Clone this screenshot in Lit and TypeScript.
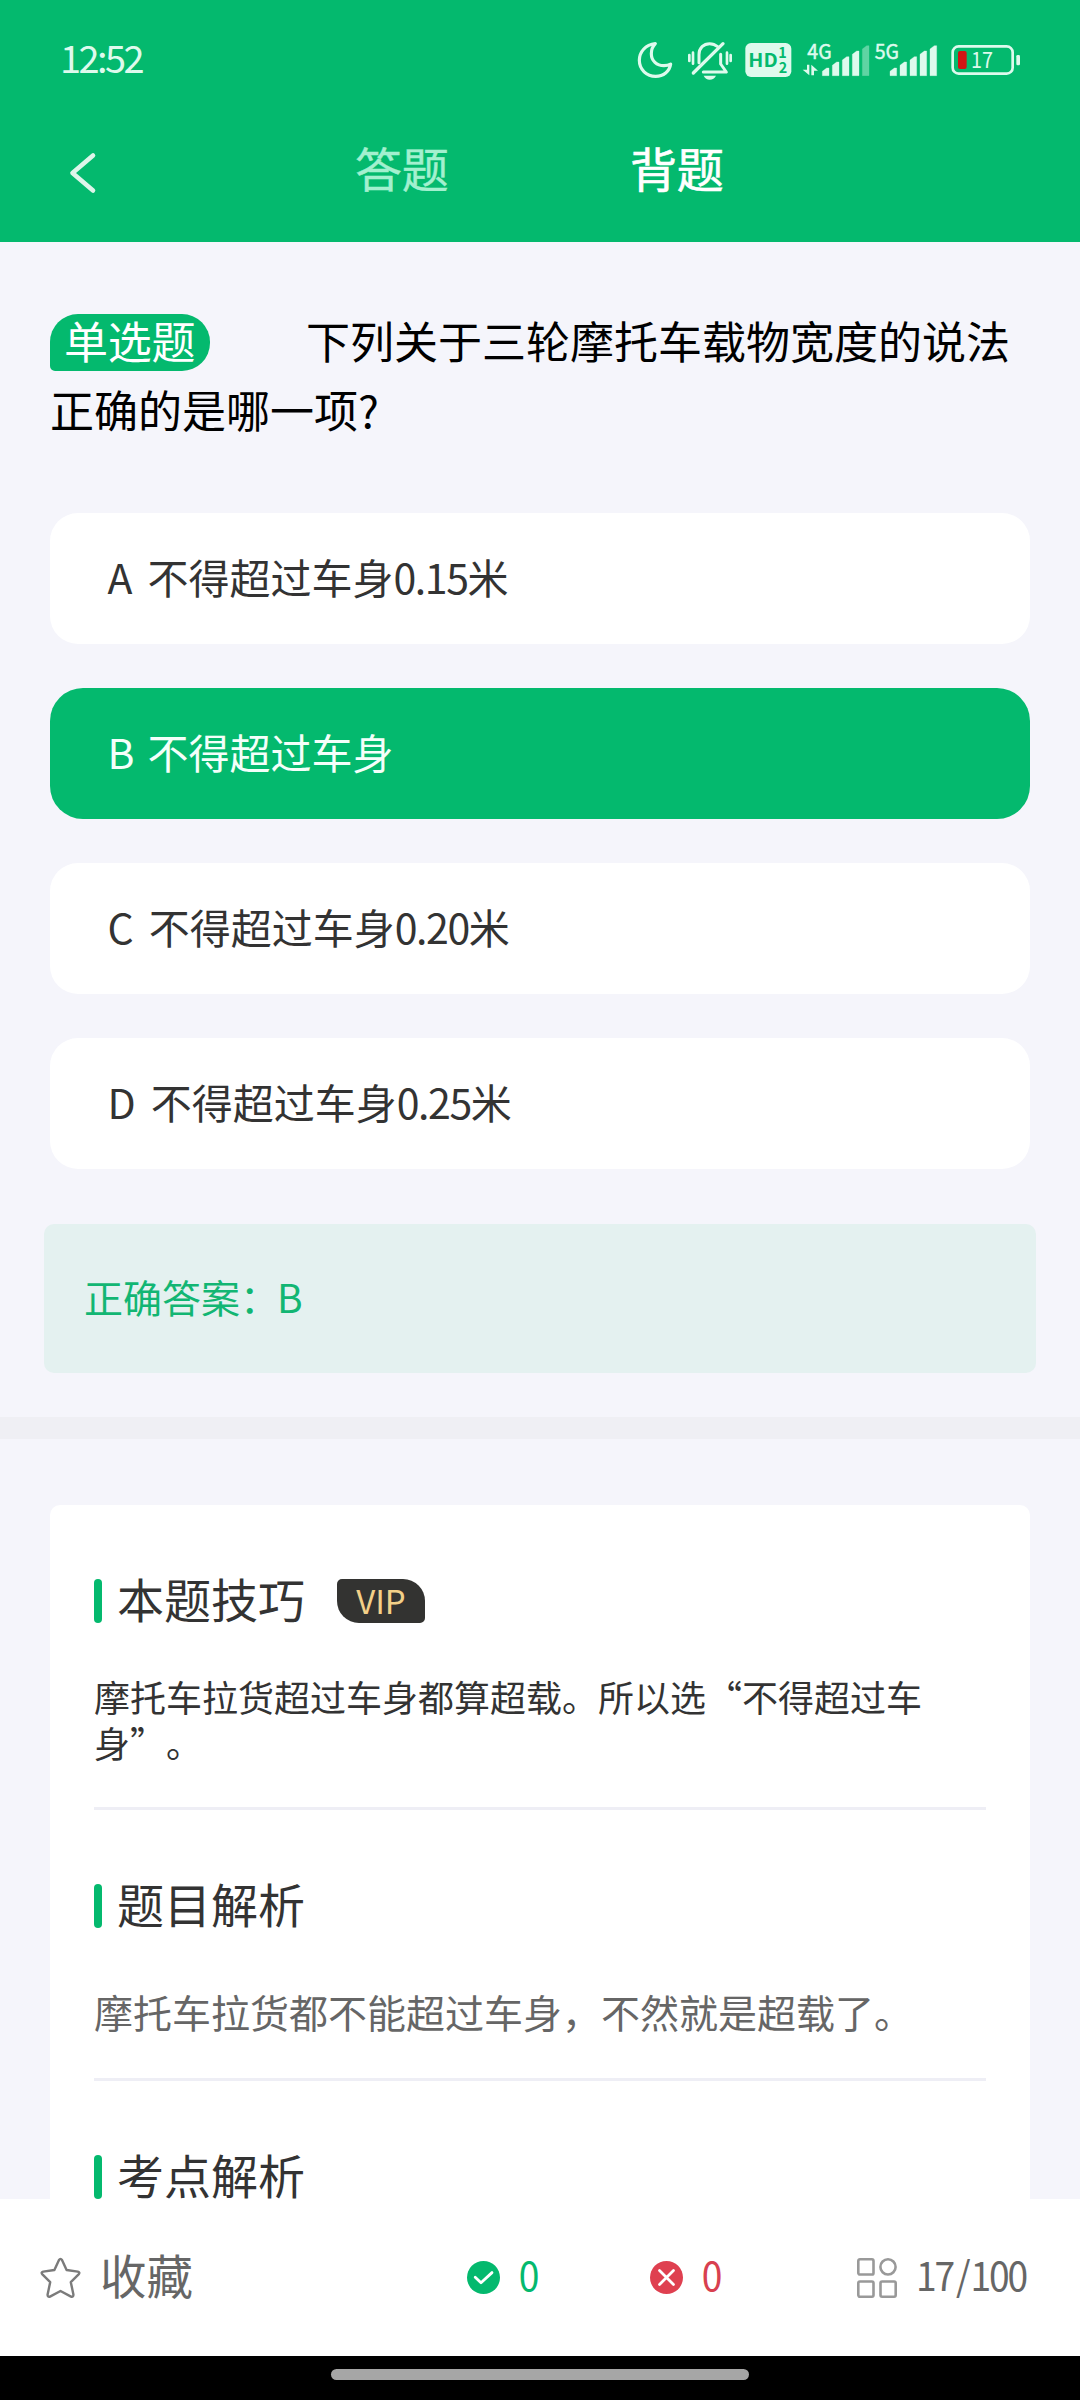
import { LitElement, html, svg, css } from "lit";
import { customElement, property } from "lit/decorators.js";
import { classMap } from "lit/directives/class-map.js";

const FONT = css`"Noto Sans CJK SC", "Noto Sans", sans-serif`;

@customElement("status-bar")
class StatusBar extends LitElement {
  static styles = css`
    :host {
      display: flex;
      align-items: center;
      justify-content: space-between;
      height: 118px;
      padding: 0 58px 0 60px;
      font-family: ${FONT};
      color: #defaed;
    }
    .time {
      font-size: 38px;
      line-height: 40px;
      letter-spacing: -2.6px;
      padding-bottom: 4px;
    }
    .icons {
      display: flex;
      padding-top: 2px;
    }
    .icons svg {
      display: block;
      height: 40px;
      overflow: visible;
    }
    text {
      font-family: ${FONT};
    }
  `;

  private bars(xs: number[], faint: number) {
    const tops = [144, 126, 110, 93, 77];
    return xs.map(
      (x, i) => svg`<path d="M${x} 167V${tops[i] + 10}L${x + 13} ${tops[i]}H${x + 20}V167Z"
        fill="#defaed" stroke="#defaed" stroke-width="1" stroke-linejoin="round" opacity=${i === faint ? 0.42 : 1}></path>`
    );
  }

  render() {
    return html`
      <span class="time">12:52</span>
      <div class="icons">
        <svg width="42" viewBox="54 60 126 120" fill="none" stroke="#defaed" stroke-width="9.5" stroke-linejoin="round">
          <path d="M106 71C76 74 58 96 58 121C58 149 80 169 107 169C130 169 149 154 152 132C145 136 138 137 132 137C110 137 94 122 94 101C94 89 98 79 106 71Z" />
        </svg>
        <svg width="58.67" viewBox="180 60 176 120" fill="none" stroke="#defaed" stroke-width="9" stroke-linecap="round">
          <path d="M237 128V104C237 84 251 71 269 71C279 71 287 75 293 80" />
          <path d="M302 103V132L319 156H250" stroke-linejoin="round" />
          <path d="M309 71L220 159" stroke-width="10" />
          <path d="M219 98V131M208 105V123M321 98V131M332 105V123" stroke-width="8" />
          <path d="M251 167H288C284 175 278 179 269 179C261 179 255 175 251 167Z" fill="#defaed" stroke="none" />
        </svg>
        <svg width="58" viewBox="356 60 174 120">
          <rect x="375" y="69" width="138" height="102" rx="17" fill="#defaed" />
          <text x="384" y="141" font-size="56" font-weight="700" fill="#04b96e" textLength="88" lengthAdjust="spacingAndGlyphs">HD</text>
          <text x="474" y="115" font-size="43" font-weight="700" fill="#04b96e">1</text>
          <text x="475" y="158" font-size="43" font-weight="700" fill="#04b96e">2</text>
        </svg>
        <svg width="75.33" viewBox="530 60 226 120" fill="#defaed">
          <text x="561" y="116" font-size="61" stroke="#defaed" stroke-width="1.5" textLength="73" lengthAdjust="spacingAndGlyphs">4G</text>
          <path d="M560 134H567V166L547 149H560ZM573 166V134L593 152H581V166Z" />
          ${this.bars([606, 636, 666, 696, 726], 4)}
        </svg>
        <svg width="71.67" viewBox="756 60 215 120" fill="#defaed">
          <text x="764" y="116" font-size="61" stroke="#defaed" stroke-width="1.5" textLength="73" lengthAdjust="spacingAndGlyphs">5G</text>
          ${this.bars([810, 840, 870, 900, 930], -1)}
        </svg>
        <svg width="78.33" viewBox="971 60 235 120">
          <rect x="997" y="79" width="180" height="82" rx="18" fill="none" stroke="#defaed" stroke-width="8" />
          <rect x="1188" y="105" width="11" height="31" rx="4" fill="#defaed" />
          <rect x="1013" y="93" width="26" height="54" rx="6" fill="#d01414" />
          <text x="1052" y="143" font-size="66" fill="#defaed" textLength="66" lengthAdjust="spacingAndGlyphs">17</text>
        </svg>
      </div>
    `;
  }
}

@customElement("tab-header")
class TabHeader extends LitElement {
  static styles = css`
    :host {
      display: flex;
      align-items: center;
      height: 124px;
      box-sizing: border-box;
      padding: 0 0 20px 68px;
      font-family: ${FONT};
    }
    .back {
      display: block;
      margin: 6px 257px 0 0;
    }
    .tab {
      width: 94px;
      margin-right: 181px;
      font-size: 47px;
      line-height: 60px;
      padding-bottom: 6px;
      letter-spacing: -0.3px;
      color: #a3f0cf;
      -webkit-text-stroke: 0.4px currentColor;
    }
    .tab.active {
      color: #fff;
      -webkit-text-stroke-width: 0.6px;
    }
  `;
  render() {
    return html`
      <svg class="back" width="30" height="42" viewBox="0 0 30 42" fill="none" stroke="#def5ea" stroke-width="4.6" stroke-linecap="round" stroke-linejoin="round">
        <path d="M25 3.5L4.5 21L25 38.5" />
      </svg>
      <span class="tab">答题</span>
      <span class="tab active">背题</span>
    `;
  }
}

@customElement("answer-option")
class AnswerOption extends LitElement {
  @property() letter = "";
  @property() text = "";
  @property({ type: Boolean }) chosen = false;
  static styles = css`
    :host {
      display: block;
      font-family: ${FONT};
    }
    .row {
      display: flex;
      align-items: center;
      gap: 15px;
      height: 131px;
      box-sizing: border-box;
      padding: 0 57.5px 6px;
      border-radius: 28px;
      background: #fff;
      color: #333;
      font-size: 41px;
      line-height: 50px;
    }
    .row.chosen {
      background: #04b96e;
      color: #f4fffa;
      border-radius: 33px;
      gap: 13px;
    }
    .num {
      letter-spacing: -1.4px;
    }
  `;
  render() {
    const [, words, num, unit] = this.text.match(/^([^\d]+)([\d.]*)(.*)$/) ?? [];
    return html`<div class=${classMap({ row: true, chosen: this.chosen })}>
      <span>${this.letter}</span>
      <span>${words}<span class="num">${num}</span>${unit}</span>
    </div>`;
  }
}

@customElement("note-section")
class NoteSection extends LitElement {
  @property() heading = "";
  @property({ type: Boolean }) vip = false;
  static styles = css`
    :host {
      display: block;
      font-family: ${FONT};
    }
    .head {
      display: flex;
      align-items: center;
      height: 44px;
    }
    .bar {
      width: 8px;
      height: 44px;
      border-radius: 4px;
      background: #04b96e;
    }
    .title {
      margin-left: 15px;
      font-size: 47px;
      line-height: 44px;
      padding-bottom: 7px;
      color: #333;
    }
    .vip {
      display: flex;
      align-items: center;
      justify-content: center;
      box-sizing: border-box;
      width: 88px;
      height: 44px;
      padding-bottom: 2px;
      margin-left: 32px;
      border-radius: 5px 22px 5px 22px;
      background: #333331;
      color: #f3d088;
      font-size: 33px;
      line-height: 40px;
    }
  `;
  render() {
    return html`
      <div class="head">
        <span class="bar"></span>
        <span class="title">${this.heading}</span>
        ${this.vip ? html`<span class="vip">VIP</span>` : null}
      </div>
      <slot></slot>
    `;
  }
}

@customElement("action-bar")
class ActionBar extends LitElement {
  static styles = css`
    :host {
      display: grid;
      grid-template-columns: 427px 183px 207px 1fr;
      align-items: center;
      height: 157px;
      box-sizing: border-box;
      padding: 0 0 0 40px;
      background: #fff;
      color: #666;
      font-family: ${FONT};
      font-size: 40px;
      line-height: 50px;
    }
    .item {
      display: flex;
      align-items: center;
    }
    svg {
      display: block;
      flex: none;
    }
    .label {
      padding-bottom: 7px;
    }
    .fav .label {
      font-size: 46.5px;
      margin-left: 19px;
    }
    .count .label {
      margin-left: 18px;
      transform: scaleX(0.93);
    }
    .right .label {
      color: #04b96e;
    }
    .wrong .label {
      color: #d8404f;
    }
    .page .label {
      margin-left: 19px;
      letter-spacing: -2.2px;
      transform: scaleX(0.93);
      transform-origin: left;
    }
    .slash {
      padding: 0 2px 0 3px;
    }
  `;
  render() {
    return html`
      <div class="item fav">
        <svg width="41" height="42" viewBox="0 0 41 42" fill="none" stroke="#7b7b7b" stroke-width="2.4" stroke-linejoin="round">
          <path d="M19 3Q20.5 0.8 22 3L26.6 13L37.8 14.6Q40.4 15.4 38.6 17.4L30.8 25.2L33.4 37.4Q33.6 40.4 31 39.6L20.5 34L10 39.6Q7.4 40.4 7.6 37.4L10.2 25.2L2.4 17.4Q0.6 15.4 3.2 14.6L14.4 13Z" />
        </svg>
        <span class="label">收藏</span>
      </div>
      <div class="item count right">
        <svg width="33" height="33" viewBox="0 0 33 33">
          <circle cx="16.5" cy="16.5" r="16.5" fill="#04b96e" />
          <path d="M8.2 16.3L14 21.8L25 11.6" fill="none" stroke="#fff" stroke-width="2.8" stroke-linecap="round" stroke-linejoin="round" />
        </svg>
        <span class="label">0</span>
      </div>
      <div class="item count wrong">
        <svg width="33" height="33" viewBox="0 0 33 33">
          <circle cx="16.5" cy="16.5" r="16.5" fill="#df4050" />
          <path d="M9.5 9.5L23.5 23.5M23.5 9.5L9.5 23.5" fill="none" stroke="#fff" stroke-width="2.8" stroke-linecap="round" />
        </svg>
        <span class="label">0</span>
      </div>
      <div class="item page">
        <svg width="40" height="40" viewBox="0 0 40 40" fill="none" stroke="#999" stroke-width="2.6">
          <rect x="1.3" y="1.3" width="15.2" height="15.2" rx="1.6" />
          <circle cx="31" cy="8.9" r="7.6" />
          <rect x="1.3" y="23.5" width="15.2" height="15.2" rx="1.6" />
          <rect x="23.5" y="23.5" width="15.2" height="15.2" rx="1.6" />
        </svg>
        <span class="label">17<span class="slash">/</span>100</span>
      </div>
    `;
  }
}

@customElement("app-root")
class AppRoot extends LitElement {
  static styles = css`
    :host {
      display: flex;
      flex-direction: column;
      width: 1080px;
      height: 2400px;
      overflow: hidden;
      background: #f5f5fb;
      font-family: ${FONT};
    }
    .top {
      flex: none;
      height: 242px;
      background: #04b96e;
    }
    main {
      flex: 1;
      min-height: 0;
      overflow: hidden;
    }
    .question {
      margin: 0;
      padding: 64px 40px 0 50px;
      height: 138px;
      font-size: 44px;
      line-height: 69px;
      color: #000;
      white-space: nowrap;
    }
    .kind {
      display: inline-block;
      width: 146px;
      padding: 0 0 4px 14px;
      margin-right: 96px;
      line-height: 53px;
      letter-spacing: -0.3px;
      color: #fff;
      background: #04b96e;
      border-radius: 28px 28px 28px 5px;
    }
    .options {
      display: flex;
      flex-direction: column;
      gap: 44px;
      padding: 69px 50px 0;
    }
    .answer {
      display: flex;
      align-items: center;
      box-sizing: border-box;
      height: 149px;
      margin: 55px 44px 44px;
      padding: 0 40px 6px;
      border-radius: 10px;
      background: #e4f1f0;
      color: #12b673;
      font-size: 39px;
      line-height: 50px;
    }
    .letter {
      margin-left: -2px;
    }
    .band {
      height: 22px;
      background: #efeff4;
    }
    .card {
      margin: 66px 50px 0;
      padding: 74px 44px 60px;
      border-radius: 10px 10px 0 0;
      background: #fff;
    }
    .note {
      margin: 0;
      color: #333;
      font-size: 36px;
      line-height: 46px;
      padding: 50px 0 42px;
      white-space: nowrap;
      text-spacing-trim: space-all;
      font-kerning: none;
    }
    .note.muted {
      color: #666;
      font-size: 39px;
      line-height: 50px;
      padding: 58px 0 42px;
    }
    .rule {
      height: 3px;
      background: #eeeef5;
      margin-bottom: 74px;
    }
    action-bar {
      flex: none;
    }
    .home {
      flex: none;
      display: flex;
      align-items: center;
      justify-content: center;
      height: 44px;
      box-sizing: border-box;
      padding-bottom: 7px;
      background: #000;
    }
    .pill {
      width: 418px;
      height: 11px;
      border-radius: 6px;
      background: #a6a6a6;
    }
  `;

  private options = [
    { letter: "A", text: "不得超过车身0.15米" },
    { letter: "B", text: "不得超过车身", chosen: true },
    { letter: "C", text: "不得超过车身0.20米" },
    { letter: "D", text: "不得超过车身0.25米" },
  ];

  render() {
    return html`
      <div class="top">
        <status-bar></status-bar>
        <tab-header></tab-header>
      </div>
      <main>
        <p class="question"><span class="kind">单选题</span>下列关于三轮摩托车载物宽度的说法<br />正确的是哪一项?</p>
        <div class="options">
          ${this.options.map(
            (o) => html`<answer-option .letter=${o.letter} .text=${o.text} .chosen=${!!o.chosen}></answer-option>`
          )}
        </div>
        <div class="answer">正确答案：<span class="letter">B</span></div>
        <div class="band"></div>
        <div class="card">
          <note-section heading="本题技巧" vip>
            <p class="note">摩托车拉货超过车身都算超载。所以选“不得超过车<br />身”。</p>
            <div class="rule"></div>
          </note-section>
          <note-section heading="题目解析">
            <p class="note muted">摩托车拉货都不能超过车身，不然就是超载了。</p>
            <div class="rule"></div>
          </note-section>
          <note-section heading="考点解析"></note-section>
        </div>
      </main>
      <action-bar></action-bar>
      <div class="home"><div class="pill"></div></div>
    `;
  }
}
